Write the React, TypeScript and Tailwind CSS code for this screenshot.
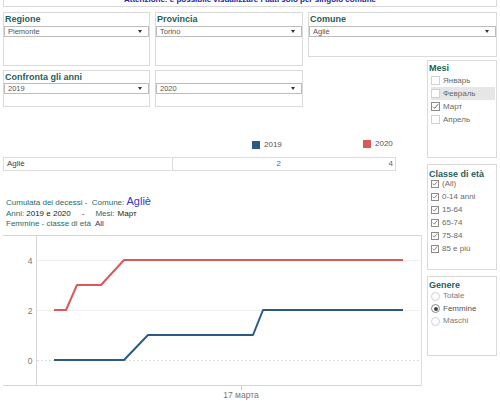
import React from "react";

const TEAL = "text-[#1f5f5a]";

function Drop({ text }: { text: string }) {
  return (
    <div className="h-[11px] border border-[#bcbcbc] bg-white flex items-center justify-between pl-[3px] pr-[6px]">
      <span className="text-[7.5px] leading-[9px] text-[#555]">{text}</span>
      <span className="w-0 h-0 border-l-[2.5px] border-r-[2.5px] border-t-[3px] border-l-transparent border-r-transparent border-t-[#333]" />
    </div>
  );
}

function Title({ text }: { text: string }) {
  return <div className={`h-[13px] pl-[1px] text-[9px] leading-[13px] font-bold ${TEAL}`}>{text}</div>;
}

function Check({ label, checked, hl, small }: { label: string; checked?: boolean; hl?: boolean; small?: boolean }) {
  return (
    <div className={`h-[13px] ml-[3px] mr-[1px] flex items-center ${small ? "gap-[3px]" : "gap-[3px]"} ${hl ? "bg-[#e6e6e6]" : ""}`}>
      <span
        className={`${small ? "w-[8px] h-[8px]" : "w-[9px] h-[9px]"} border ${checked ? "border-[#8c8c8c]" : "border-[#d2d2d2]"} bg-white flex items-center justify-center`}
      >
        {checked && (
          <svg width="7" height="7" viewBox="0 0 7 7">
            <path d="M1 3.6 L2.7 5.4 L6 1.2" fill="none" stroke="#707070" strokeWidth="1" />
          </svg>
        )}
      </span>
      <span className="text-[8px] text-[#6a6a6a] leading-none">{label}</span>
    </div>
  );
}

function Radio({ label, sel }: { label: string; sel?: boolean }) {
  return (
    <div className="h-[12.5px] ml-[3px] flex items-center gap-[3px]">
      <span
        className={`w-[9px] h-[9px] rounded-full border ${sel ? "border-[#8a8a8a]" : "border-[#cfcfcf]"} bg-white flex items-center justify-center`}
      >
        {sel && <span className="w-[4px] h-[4px] rounded-full bg-[#444]" />}
      </span>
      <span className={`text-[8px] leading-none ${sel ? "text-[#555]" : "text-[#7a7a7a]"}`}>{label}</span>
    </div>
  );
}

export default function App() {
  return (
    <div className="w-[500px] h-[409px] overflow-hidden bg-white font-['Liberation_Sans',Arial,sans-serif]">
      {/* banner */}
      <div className="ml-[3px] w-[494px] h-[7px] border-x border-b border-[#d9d9d9] overflow-hidden">
        <div className="-mt-[5px] text-center text-[8px] leading-[10px] font-bold text-[#2323a3]">
          Attenzione: è possibile visualizzare i dati solo per singolo comune
        </div>
      </div>

      {/* row 1 */}
      <div className="mt-[5px] flex items-start pl-[3px]">
        <div className="w-[147px] h-[54px] border border-[#dadada]">
          <Title text="Regione" />
          <Drop text="Piemonte" />
        </div>
        <div className="ml-[5px] w-[148px] h-[54px] border border-[#dadada]">
          <Title text="Provincia" />
          <Drop text="Torino" />
        </div>
        <div className="ml-[5px] w-[189px] h-[45px] border border-[#dadada]">
          <Title text="Comune" />
          <Drop text="Agliè" />
        </div>
      </div>

      <div className="flex items-start">
        {/* left column */}
        <div className="w-[424px] shrink-0">
          <div className="mt-[4px] flex pl-[3px]">
            <div className="w-[147px] h-[37px] border border-[#dadada]">
              <div className={`h-[12px] pl-[1px] text-[9px] leading-[12px] font-bold ${TEAL}`}>Confronta gli anni</div>
              <Drop text="2019" />
            </div>
            <div className="ml-[5px] w-[148px] h-[37px] border border-[#dadada] pt-[12px]">
              <Drop text="2020" />
            </div>
          </div>

          {/* legend */}
          <div className="mt-[33px] h-[10px] flex items-center pl-[252px]">
            <div className="w-[111px] flex items-center">
              <span className="w-[8px] h-[8px] bg-[#2b5a88]" />
              <span className="ml-[4px] text-[8px] leading-none text-[#555]">2019</span>
            </div>
            <div className="flex items-center -mt-[3px]">
              <span className="w-[8px] h-[8px] bg-[#e0575a]" />
              <span className="ml-[4px] text-[8px] leading-none text-[#555]">2020</span>
            </div>
          </div>

          {/* table */}
          <div className="mt-[7px] ml-[3px] w-[393px] h-[14px] border border-[#dcdcdc] flex text-[8px] leading-[12px] text-[#444]">
            <div className="w-[169px] border-r border-[#dcdcdc] pl-[3px]">Agliè</div>
            <div className="w-[111px] text-right pr-[3px] text-[#666]">2</div>
            <div className="flex-1 text-right pr-[2px] text-[#666]">4</div>
          </div>

          {/* chart title */}
          <div className="mt-[24px] ml-[6px]">
            <div className="h-[13px] flex items-baseline text-[8px] leading-[13px] text-[#2a6a64]">
              <span>Cumulata dei decessi -&nbsp; Comune:&nbsp;</span>
              <span className="text-[11px] text-[#3535c8]">Agliè</span>
            </div>
            <div className="h-[11px] flex items-baseline text-[8px] leading-[11px]">
              <span className="text-[#2a6a64]">Anni:</span>
              <span className="ml-[2px] text-[#222]">2019 e 2020</span>
              <span className="ml-[11px] text-[#222]">-</span>
              <span className="ml-[11px] text-[#2a6a64]">Mesi:</span>
              <span className="ml-[3px] text-[#222]">Март</span>
            </div>
            <div className="h-[10px] flex items-baseline text-[8px] leading-[10px]">
              <span className="text-[#2a6a64]">Femmine - classe di età</span>
              <span className="ml-[4px] text-[#333366]">All</span>
            </div>
          </div>

          {/* chart */}
          <div className="mt-[6px] ml-[3px]">
            <svg width="420" height="155" viewBox="0 0 420 155" className="block">
              <line x1="0" y1="0.5" x2="419" y2="0.5" stroke="#d6d6d6" />
              <line x1="0" y1="150.5" x2="419" y2="150.5" stroke="#d6d6d6" />
              <line x1="418.5" y1="0" x2="418.5" y2="151" stroke="#dedede" />
              <line x1="33.5" y1="0" x2="33.5" y2="151" stroke="#d6d6d6" />
              <line x1="34" y1="25.5" x2="418" y2="25.5" stroke="#f0f0f0" />
              <line x1="34" y1="75.5" x2="418" y2="75.5" stroke="#f0f0f0" />
              <line x1="34" y1="125.5" x2="418" y2="125.5" stroke="#dcdcdc" strokeDasharray="2 2" />
              <line x1="238.5" y1="151" x2="238.5" y2="155" stroke="#cccccc" />
              <text x="29.5" y="28.5" fontSize="8.5" fill="#777" textAnchor="end">4</text>
              <text x="29.5" y="78.5" fontSize="8.5" fill="#777" textAnchor="end">2</text>
              <text x="29.5" y="128.5" fontSize="8.5" fill="#777" textAnchor="end">0</text>
              <polyline
                points="51,75 63,75 74,50 98,50 121,25 400,25"
                fill="none"
                stroke="#e0575a"
                strokeWidth="2"
                strokeLinejoin="round"
              />
              <polyline
                points="51,125 121,125 145,100 250,100 260,75 400,75"
                fill="none"
                stroke="#2b5a88"
                strokeWidth="2"
                strokeLinejoin="round"
              />
            </svg>
            <div className="w-[476px] text-center text-[8.5px] leading-[10px] text-[#777]">17 марта</div>
          </div>
        </div>

        {/* right column */}
        <div className="ml-[3px] -mt-[6px] w-[70px] shrink-0">
          <div className="h-[98px] border border-[#dadada]">
            <div className={`h-[13px] pt-[3px] pl-[1px] text-[9px] leading-[9px] font-bold ${TEAL}`}>Mesi</div>
            <Check label="Январь" />
            <Check label="Февраль" hl />
            <Check label="Март" checked />
            <Check label="Апрель" />
          </div>
          <div className="mt-[6px] h-[106px] border border-[#dadada]">
            <div className={`h-[12px] pt-[5px] pl-[1px] text-[9px] leading-[9px] font-bold whitespace-nowrap ${TEAL}`}>Classe di età</div>
            <Check label="(All)" checked small />
            <Check label="0-14 anni" checked small />
            <Check label="15-64" checked small />
            <Check label="65-74" checked small />
            <Check label="75-84" checked small />
            <Check label="85 e più" checked small />
          </div>
          <div className="mt-[6px] h-[80px] border border-[#dadada]">
            <div className={`h-[13px] pt-[4px] pl-[1px] text-[9px] leading-[9px] font-bold ${TEAL}`}>Genere</div>
            <Radio label="Totale" />
            <Radio label="Femmine" sel />
            <Radio label="Maschi" />
          </div>
        </div>
      </div>
    </div>
  );
}
